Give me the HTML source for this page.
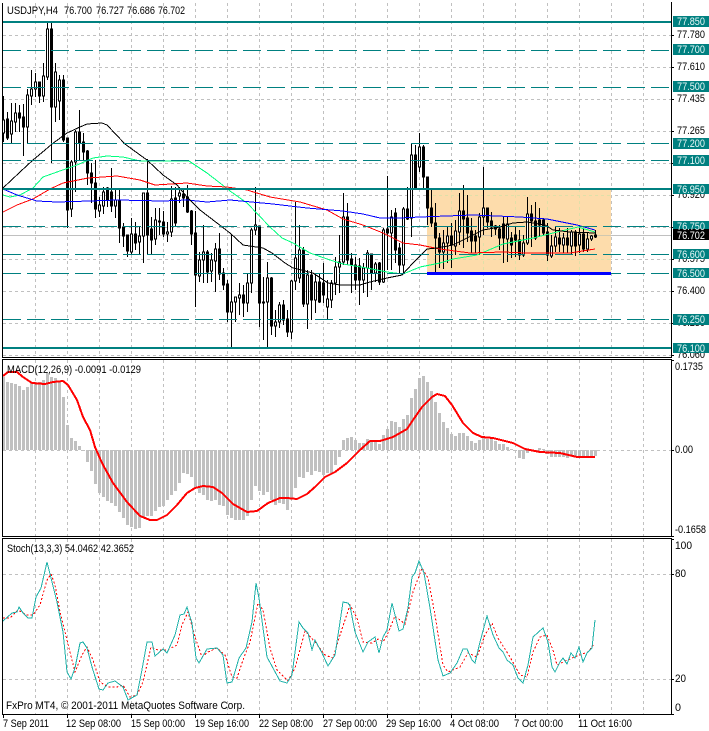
<!DOCTYPE html>
<html><head><meta charset="utf-8"><title>USDJPY,H4</title>
<style>
html,body{margin:0;padding:0;background:#fff;width:709px;height:731px;overflow:hidden}
svg{display:block;position:absolute;left:0;top:0}
text{font-family:"Liberation Sans",sans-serif;font-size:11px;fill:#000}
.l{fill:#e8f8f8}
path,polyline,rect,line{shape-rendering:crispEdges}
</style></head><body>
<svg width="709" height="731" viewBox="0 0 709 731" xmlns="http://www.w3.org/2000/svg">
<rect x="0" y="0" width="709" height="731" fill="#fff"/>
<!-- gray grid -->
<g stroke="#c0c0c0" stroke-width="1" stroke-dasharray="3 3" fill="none">
<path d="M3 35.5H671M3 67.5H671M3 99.5H671M3 131.5H671M3 163.5H671M3 195.5H671M3 227.5H671M3 259.5H671M3 291.5H671M3 323.5H671M3 355.5H671"/>
<path d="M35.5 3V357M67.5 3V357M99.5 3V357M131.5 3V357M163.5 3V357M195.5 3V357M227.5 3V357M259.5 3V357M291.5 3V357M323.5 3V357M355.5 3V357M387.5 3V357M419.5 3V357M451.5 3V357M483.5 3V357M515.5 3V357M547.5 3V357M579.5 3V357M611.5 3V357M643.5 3V357"/>
<path d="M3 450.5H671"/>
<path d="M35.5 360V536M67.5 360V536M99.5 360V536M131.5 360V536M163.5 360V536M195.5 360V536M227.5 360V536M259.5 360V536M291.5 360V536M323.5 360V536M355.5 360V536M387.5 360V536M419.5 360V536M451.5 360V536M483.5 360V536M515.5 360V536M547.5 360V536M579.5 360V536M611.5 360V536M643.5 360V536"/>
<path d="M3 574.5H671M3 679.5H671"/>
<path d="M35.5 539V714M67.5 539V714M99.5 539V714M131.5 539V714M163.5 539V714M195.5 539V714M227.5 539V714M259.5 539V714M291.5 539V714M323.5 539V714M355.5 539V714M387.5 539V714M419.5 539V714M451.5 539V714M483.5 539V714M515.5 539V714M547.5 539V714M579.5 539V714M611.5 539V714M643.5 539V714"/>
</g>
<!-- current price line -->
<path d="M3 235.5H671" stroke="#c0c0c0" fill="none"/>
<!-- rectangle -->
<rect x="427" y="189" width="184" height="84" fill="#fddcab"/>
<g stroke="#dfe0a8" stroke-width="1" stroke-dasharray="3 3" fill="none">
<path d="M451.5 189V273M483.5 189V273M515.5 189V273M547.5 189V273M579.5 189V273M427 195.5H611M427 259.5H611"/>
</g>
<path d="M427 235.5H611" stroke="#d0c8b0" fill="none"/>
<!-- wicks -->
<path stroke="#000" fill="none" d="M3.5 96V142M7.5 112V140M11.5 103V144M15.5 103V132M19.5 105V132M23.5 104V156M27.5 89V143M31.5 70V105M35.5 73V97M39.5 82V103M43.5 63V102M47.5 22V80M51.5 22V163M55.5 63V122M59.5 75V120M63.5 75V142M67.5 138V228M71.5 160V217M75.5 130V192M79.5 110V160M83.5 133V160M87.5 150V185M91.5 163V203M95.5 160V218M99.5 197V217M103.5 187V214M107.5 187V207M111.5 168V212M115.5 188V218M119.5 188V243M123.5 223V247M127.5 235V257M131.5 218V255M135.5 222V250M139.5 227V255M143.5 193V263M147.5 159V255M151.5 217V254M155.5 208V245M159.5 208V235M163.5 211V237M167.5 222V242M171.5 186V237M175.5 187V227M179.5 187V203M183.5 188V207M187.5 185V213M191.5 210V245M195.5 211V307M199.5 252V282M203.5 225V283M207.5 250V283M211.5 253V282M215.5 243V292M219.5 233V280M223.5 268V290M227.5 280V322M231.5 235V347M235.5 297V322M239.5 283V315M243.5 285V317M247.5 273V312M251.5 228V293M255.5 187V235M259.5 226V327M263.5 277V340M267.5 262V347M271.5 277V335M275.5 310V337M279.5 302V328M283.5 300V325M287.5 310V337M291.5 280V339M295.5 202V290M299.5 225V283M303.5 247V307M307.5 270V329M311.5 270V320M315.5 273V313M319.5 273V303M323.5 263V303M327.5 280V319M331.5 280V308M335.5 257V295M339.5 235V293M343.5 193V265M347.5 203V265M351.5 253V293M355.5 257V290M359.5 258V305M363.5 263V293M367.5 250V297M371.5 254V290M375.5 262V282M379.5 262V285M383.5 228V283M387.5 176V270M391.5 210V270M395.5 208V263M399.5 243V273M403.5 207V273M407.5 187V220M411.5 143V237M415.5 145V188M419.5 133V172M423.5 145V188M427.5 177V225M431.5 188V227M435.5 203V272M439.5 233V268M443.5 230V269M447.5 227V263M451.5 223V268M455.5 220V255M459.5 193V245M463.5 185V248M467.5 195V242M471.5 218V253M475.5 230V253M479.5 213V255M483.5 167V235M487.5 208V228M491.5 212V237M495.5 225V235M499.5 225V250M503.5 217V263M507.5 217V262M511.5 232V258M515.5 227V257M519.5 230V260M523.5 235V257M527.5 197V245M531.5 205V247M535.5 202V240M539.5 208V237M543.5 218V235M547.5 223V261M551.5 235V258M555.5 227V252M559.5 228V252M563.5 233V253M567.5 228V253M571.5 230V255M575.5 230V256M579.5 227V253M583.5 228V252M587.5 233V252M591.5 235V241M595.5 230V238"/>
<!-- white bodies -->
<path stroke="#000" fill="#fff" d="M2.5 120h2v13h-2zM10.5 121h2v13h-2zM14.5 113h2v9h-2zM26.5 95h2v32h-2zM30.5 89h2v7h-2zM34.5 82h2v7h-2zM42.5 76h2v20h-2zM46.5 29h2v48h-2zM54.5 72h2v35h-2zM58.5 80h2v21h-2zM70.5 162h2v47h-2zM74.5 132h2v30h-2zM98.5 205h2v6h-2zM102.5 192h2v14h-2zM114.5 200h2v6h-2zM130.5 234h2v18h-2zM138.5 236h2v6h-2zM142.5 193h2v43h-2zM154.5 220h2v19h-2zM158.5 221h2v1h-2zM166.5 232h2v2h-2zM170.5 199h2v33h-2zM178.5 193h2v3h-2zM198.5 260h2v16h-2zM202.5 252h2v8h-2zM210.5 260h2v11h-2zM214.5 249h2v12h-2zM230.5 302h2v10h-2zM234.5 297h2v5h-2zM238.5 295h2v3h-2zM246.5 283h2v20h-2zM250.5 230h2v53h-2zM254.5 225h2v5h-2zM266.5 278h2v24h-2zM274.5 322h2v4h-2zM278.5 305h2v17h-2zM290.5 281h2v51h-2zM294.5 258h2v23h-2zM298.5 250h2v28h-2zM306.5 275h2v29h-2zM314.5 282h2v18h-2zM326.5 299h2v8h-2zM330.5 283h2v17h-2zM334.5 267h2v16h-2zM338.5 262h2v5h-2zM342.5 217h2v45h-2zM362.5 268h2v12h-2zM366.5 253h2v15h-2zM374.5 264h2v9h-2zM382.5 230h2v52h-2zM390.5 217h2v16h-2zM402.5 209h2v56h-2zM410.5 155h2v63h-2zM418.5 147h2v20h-2zM442.5 243h2v9h-2zM446.5 236h2v7h-2zM454.5 231h2v15h-2zM458.5 211h2v21h-2zM478.5 217h2v20h-2zM482.5 208h2v9h-2zM506.5 224h2v15h-2zM522.5 243h2v12h-2zM526.5 214h2v29h-2zM550.5 246h2v10h-2zM554.5 237h2v9h-2zM562.5 238h2v7h-2zM570.5 232h2v14h-2zM578.5 234h2v11h-2zM586.5 239h2v10h-2zM590.5 236h2v3h-2z"/>
<!-- black bodies -->
<path stroke="#000" fill="#000" d="M6.5 119h2v19h-2zM18.5 113h2v5h-2zM22.5 117h2v10h-2zM38.5 82h2v14h-2zM50.5 29h2v78h-2zM62.5 80h2v60h-2zM66.5 138h2v72h-2zM78.5 132h2v11h-2zM82.5 142h2v10h-2zM86.5 151h2v22h-2zM90.5 173h2v10h-2zM94.5 183h2v26h-2zM106.5 188h2v12h-2zM110.5 192h2v14h-2zM118.5 200h2v28h-2zM122.5 227h2v9h-2zM126.5 235h2v16h-2zM134.5 234h2v9h-2zM146.5 193h2v42h-2zM150.5 229h2v11h-2zM162.5 222h2v12h-2zM174.5 198h2v25h-2zM182.5 194h2v4h-2zM186.5 197h2v15h-2zM190.5 211h2v23h-2zM194.5 233h2v42h-2zM206.5 252h2v20h-2zM218.5 249h2v25h-2zM222.5 273h2v12h-2zM226.5 284h2v28h-2zM242.5 295h2v8h-2zM258.5 226h2v77h-2zM262.5 302h2v1h-2zM270.5 278h2v48h-2zM282.5 305h2v15h-2zM286.5 319h2v13h-2zM302.5 250h2v54h-2zM310.5 275h2v25h-2zM318.5 282h2v20h-2zM322.5 283h2v12h-2zM346.5 217h2v43h-2zM350.5 259h2v6h-2zM354.5 265h2v15h-2zM358.5 266h2v14h-2zM370.5 254h2v19h-2zM378.5 263h2v19h-2zM386.5 229h2v4h-2zM394.5 213h2v37h-2zM398.5 248h2v17h-2zM406.5 209h2v10h-2zM414.5 155h2v33h-2zM422.5 147h2v30h-2zM426.5 177h2v31h-2zM430.5 208h2v15h-2zM434.5 223h2v15h-2zM438.5 238h2v14h-2zM450.5 236h2v9h-2zM462.5 211h2v8h-2zM466.5 218h2v15h-2zM470.5 231h2v10h-2zM474.5 236h2v5h-2zM486.5 208h2v14h-2zM490.5 221h2v6h-2zM494.5 226h2v3h-2zM498.5 229h2v9h-2zM502.5 224h2v14h-2zM510.5 238h2v7h-2zM514.5 235h2v5h-2zM518.5 240h2v15h-2zM530.5 214h2v7h-2zM534.5 221h2v17h-2zM538.5 220h2v5h-2zM542.5 220h2v13h-2zM546.5 232h2v23h-2zM558.5 238h2v6h-2zM566.5 238h2v7h-2zM574.5 232h2v14h-2zM582.5 234h2v15h-2zM594.5 235h2v2h-2z"/>
<!-- moving averages -->
<g fill="none" stroke-width="1">
<polyline stroke="#00ff7f" points="3,195 10,197 20,195 33,188 43,177 57,172 77,165 93,158 107,156 123,157 140,161 189,161 207,173 220,183 230,191 247,203 270,227 282,238 293,243 310,253 330,260 343,264 367,268 387,272 403,274 420,267 440,263 453,259 477,255 503,244 533,238 557,232 578,227 595,232"/>
<polyline stroke="#ff0000" points="3,212 17,205 33,199 50,189 63,183 88,178 117,176 140,180 155,185 187,183 207,186 227,187 247,190 270,197 300,202 327,210 343,219 363,225 383,233 403,243 420,245 440,249 470,253 503,252 527,253 570,253 595,249"/>
<polyline stroke="#0000ff" points="3,189 17,195 37,201 57,202 90,201 117,200 163,201 187,200 207,202 230,200 273,204 307,208 343,211 363,214 380,218 400,218 420,217 473,215 520,217 547,219 577,225 595,230"/>
<polyline stroke="#000" points="3,188 20,172 33,160 45,150 52,144 67,133 80,127 87,124 102,123 107,125 125,144 140,155 147,160 163,175 177,185 187,197 200,210 217,223 230,233 243,245 263,248 272,253 285,263 293,268 313,273 328,283 340,285 360,285 370,282 387,278 402,275 413,263 420,256 427,249 437,248 453,245 463,240 483,230 500,227 513,223 527,222 545,225 553,230 570,232 595,233"/>
</g>
<!-- teal lines -->
<g fill="none" stroke="#008080">
<path stroke-width="2" d="M3 22H671M3 189H671M3 348H671"/>
<path stroke-width="1" stroke-dasharray="18 6" d="M3 50.5H669M3 87.5H669M3 143.5H669M3 160.5H669M3 226.5H669M3 254.5H669M3 273.5H669M3 319.5H669"/>
</g>
<rect x="427" y="272" width="184" height="3" fill="#0000ff"/>
<!-- MACD histogram -->
<path stroke="#c0c0c0" stroke-width="3" fill="none" d="M3.5 450V377M7.5 450V382M11.5 450V383M15.5 450V384M19.5 450V386M23.5 450V390M27.5 450V387M31.5 450V383M35.5 450V382M39.5 450V382M43.5 450V380M47.5 450V373M51.5 450V377M55.5 450V378M59.5 450V382M63.5 450V397M67.5 450V425M71.5 450V438M75.5 450V441M79.5 450V446M83.5 450V451M87.5 450V462M91.5 450V471M95.5 450V484M99.5 450V493M103.5 450V497M107.5 450V501M111.5 450V503M115.5 450V506M119.5 450V512M123.5 450V518M127.5 450V525M131.5 450V527M135.5 450V529M139.5 450V528M143.5 450V517M147.5 450V516M151.5 450V516M155.5 450V511M159.5 450V507M163.5 450V506M167.5 450V500M171.5 450V495M175.5 450V491M179.5 450V483M183.5 450V473M187.5 450V474M191.5 450V477M195.5 450V488M199.5 450V493M203.5 450V495M207.5 450V500M211.5 450V501M215.5 450V500M219.5 450V505M223.5 450V506M227.5 450V515M231.5 450V518M235.5 450V520M239.5 450V520M243.5 450V520M247.5 450V516M251.5 450V500M255.5 450V486M259.5 450V491M263.5 450V495M267.5 450V492M271.5 450V500M275.5 450V505M279.5 450V503M283.5 450V504M287.5 450V510M291.5 450V498M295.5 450V488M299.5 450V477M303.5 450V478M307.5 450V472M311.5 450V475M315.5 450V471M319.5 450V472M323.5 450V475M327.5 450V473M331.5 450V473M335.5 450V465M339.5 450V457M343.5 450V440M347.5 450V438M351.5 450V437M355.5 450V440M359.5 450V443M363.5 450V443M367.5 450V439M371.5 450V440M375.5 450V442M379.5 450V444M383.5 450V435M387.5 450V429M391.5 450V421M395.5 450V422M399.5 450V427M403.5 450V419M407.5 450V415M411.5 450V398M415.5 450V389M419.5 450V378M423.5 450V376M427.5 450V382M431.5 450V391M435.5 450V402M439.5 450V413M443.5 450V422M447.5 450V428M451.5 450V434M455.5 450V436M459.5 450V433M463.5 450V433M467.5 450V436M471.5 450V441M475.5 450V443M479.5 450V440M483.5 450V438M487.5 450V439M491.5 450V438M495.5 450V441M499.5 450V444M503.5 450V444M507.5 450V447M511.5 450V449M515.5 450V451M519.5 450V458M523.5 450V459M527.5 450V453M531.5 450V451M535.5 450V451M539.5 450V448M543.5 450V449M547.5 450V454M551.5 450V457M555.5 450V457M559.5 450V457M563.5 450V457M567.5 450V458M571.5 450V456M575.5 450V456M579.5 450V457M583.5 450V458M587.5 450V456M591.5 450V457M595.5 450V456"/>
<!-- MACD signal -->
<polyline fill="none" stroke="#ff0000" stroke-width="2" points="3,376 8,372 17,372 23,377 32,383 45,384 53,382 63,381 68,385 77,400 83,417 90,430 95,447 102,463 113,483 127,502 140,516 150,520 157,520 167,515 177,505 187,493 195,488 203,486 213,487 222,493 233,504 247,512 257,511 268,503 280,498 287,498 297,499 307,494 315,487 325,477 335,472 347,463 360,450 370,441 380,441 393,437 407,429 413,420 422,407 432,397 437,394 445,396 452,405 463,423 473,433 482,437 493,438 513,443 525,449 540,452 560,453 577,457 595,457"/>
<!-- Stochastic -->
<polyline fill="none" stroke="#ff0000" stroke-dasharray="2 2" points="3,618 10,618 18,610 27,615 33,615 40,605 47,580 51,574 55,585 60,612 65,632 70,652 75,672 82,655 87,647 93,660 100,682 108,687 117,687 123,685 130,697 137,695 143,682 151,647 158,650 167,650 177,645 182,625 188,612 195,637 202,657 208,652 217,648 225,655 232,677 237,678 243,660 250,642 258,603 263,610 270,648 277,670 288,681 295,668 305,631 315,642 325,655 333,658 340,635 350,605 357,618 363,642 372,643 378,639 383,642 388,633 395,616 405,624 413,592 422,568 428,578 435,615 443,665 448,672 460,667 468,653 477,657 485,635 492,623 498,638 510,657 520,675 527,677 533,652 540,637 547,635 553,650 557,665 563,662 572,658 580,655 588,652 594,644"/>
<polyline fill="none" stroke="#20b2aa" points="3,621 12,613 17,612 19,607 23,613 28,618 32,618 36,597 41,588 47,562 52,582 57,602 63,632 67,672 71,679 75,668 80,643 83,642 87,648 92,667 99,689 103,690 108,683 115,681 123,687 128,700 137,695 141,675 147,642 152,642 155,656 163,649 167,653 175,635 180,615 184,614 187,607 192,623 196,658 199,663 207,649 217,648 223,655 227,683 232,682 239,658 246,648 252,622 256,583 259,598 263,628 267,657 280,681 287,683 292,675 299,622 303,628 308,633 312,650 315,640 322,653 328,666 335,655 343,602 348,603 350,606 355,632 363,652 368,642 375,637 379,653 383,637 387,630 392,603 395,615 399,631 403,629 408,608 412,577 415,573 419,561 424,573 430,608 438,660 443,676 450,673 457,663 463,649 467,649 472,660 475,663 480,642 487,616 493,635 499,648 503,652 507,660 513,665 518,678 523,683 528,665 533,637 543,628 548,642 552,667 555,672 560,662 563,658 567,664 571,653 575,658 579,647 583,662 587,653 592,648 595,620"/>
<!-- frames -->
<g stroke="#000" fill="none">
<path d="M2.5 3V357.5H671.5V2"/>
<path d="M2.5 359.5H671.5V536.5H2.5Z"/>
<path d="M2.5 538.5H671.5V714.5H2.5Z"/>
<path d="M672 35.5h2M672 67.5h2M672 99.5h2M672 131.5h2M672 163.5h2M672 195.5h2M672 227.5h2M672 259.5h2M672 291.5h2M672 323.5h2M672 355.5h2M672 360.5h2M672 450.5h2M672 536.5h2M672 539.5h2M672 574.5h2M672 679.5h2M672 714.5h2"/>
<path d="M3.5 715v3M67.5 715v3M131.5 715v3M195.5 715v3M259.5 715v3M323.5 715v3M387.5 715v3M451.5 715v3M515.5 715v3M579.5 715v3"/>
</g>
<!-- header text -->
<text lengthAdjust="spacingAndGlyphs" x="7" y="14" textLength="51">USDJPY,H4</text>
<text lengthAdjust="spacingAndGlyphs" x="64" y="14" textLength="28">76.700</text>
<text lengthAdjust="spacingAndGlyphs" x="96" y="14" textLength="28">76.727</text>
<text lengthAdjust="spacingAndGlyphs" x="127" y="14" textLength="28">76.686</text>
<text lengthAdjust="spacingAndGlyphs" x="158" y="14" textLength="27">76.702</text>
<text lengthAdjust="spacingAndGlyphs" x="7" y="373" textLength="134">MACD(12,26,9) -0.0091 -0.0129</text>
<text lengthAdjust="spacingAndGlyphs" x="7" y="552" textLength="127">Stoch(13,3,3) 54.0462 42.3652</text>
<text lengthAdjust="spacingAndGlyphs" x="6" y="709" textLength="239">FxPro MT4, © 2001-2011 MetaQuotes Software Corp.</text>
<!-- price axis -->
<text lengthAdjust="spacingAndGlyphs" x="677" y="38" textLength="28">77.780</text>
<text lengthAdjust="spacingAndGlyphs" x="677" y="70" textLength="28">77.610</text>
<text lengthAdjust="spacingAndGlyphs" x="677" y="102" textLength="28">77.435</text>
<text lengthAdjust="spacingAndGlyphs" x="677" y="134" textLength="28">77.265</text>
<text lengthAdjust="spacingAndGlyphs" x="677" y="166" textLength="28">77.095</text>
<text lengthAdjust="spacingAndGlyphs" x="677" y="198" textLength="28">76.920</text>
<text lengthAdjust="spacingAndGlyphs" x="677" y="262" textLength="28">76.575</text>
<text lengthAdjust="spacingAndGlyphs" x="677" y="294" textLength="28">76.400</text>
<text lengthAdjust="spacingAndGlyphs" x="677" y="326" textLength="28">76.230</text>
<text lengthAdjust="spacingAndGlyphs" x="677" y="358" textLength="28">76.060</text>
<g fill="#008080">
<rect x="673" y="16" width="36" height="11"/>
<rect x="673" y="44" width="36" height="11"/>
<rect x="673" y="81" width="36" height="11"/>
<rect x="673" y="138" width="36" height="11"/>
<rect x="673" y="155" width="36" height="11"/>
<rect x="673" y="184" width="36" height="10"/>
<rect x="673" y="221" width="36" height="11"/>
<rect x="673" y="249" width="36" height="10"/>
<rect x="673" y="268" width="36" height="10"/>
<rect x="673" y="314" width="36" height="11"/>
<rect x="673" y="343" width="36" height="10"/>
</g>
<rect x="673" y="229" width="36" height="11" fill="#000"/>
<text lengthAdjust="spacingAndGlyphs" class="l" x="677" y="25" textLength="28">77.850</text>
<text lengthAdjust="spacingAndGlyphs" class="l" x="677" y="53" textLength="28">77.700</text>
<text lengthAdjust="spacingAndGlyphs" class="l" x="677" y="90" textLength="28">77.500</text>
<text lengthAdjust="spacingAndGlyphs" class="l" x="677" y="147" textLength="28">77.200</text>
<text lengthAdjust="spacingAndGlyphs" class="l" x="677" y="164" textLength="28">77.100</text>
<text lengthAdjust="spacingAndGlyphs" class="l" x="677" y="193" textLength="28">76.950</text>
<text lengthAdjust="spacingAndGlyphs" class="l" x="677" y="230" textLength="28">76.750</text>
<text lengthAdjust="spacingAndGlyphs" style="fill:#fff" x="677" y="239" textLength="28">76.702</text>
<text lengthAdjust="spacingAndGlyphs" class="l" x="677" y="258" textLength="28">76.600</text>
<text lengthAdjust="spacingAndGlyphs" class="l" x="677" y="277" textLength="28">76.500</text>
<text lengthAdjust="spacingAndGlyphs" class="l" x="677" y="323" textLength="28">76.250</text>
<text lengthAdjust="spacingAndGlyphs" class="l" x="677" y="352" textLength="28">76.100</text>
<!-- indicator axes -->
<text lengthAdjust="spacingAndGlyphs" x="675" y="370" textLength="28">0.1735</text>
<text lengthAdjust="spacingAndGlyphs" x="675" y="453" textLength="18">0.00</text>
<text lengthAdjust="spacingAndGlyphs" x="675" y="533" textLength="31">-0.1658</text>
<text lengthAdjust="spacingAndGlyphs" x="675" y="549" textLength="17">100</text>
<text lengthAdjust="spacingAndGlyphs" x="675" y="577" textLength="11">80</text>
<text lengthAdjust="spacingAndGlyphs" x="675" y="682" textLength="11">20</text>
<text lengthAdjust="spacingAndGlyphs" x="675" y="711" textLength="6">0</text>
<!-- date axis -->
<text lengthAdjust="spacingAndGlyphs" x="3" y="727" textLength="46">7 Sep 2011</text>
<text lengthAdjust="spacingAndGlyphs" x="66" y="727" textLength="55">12 Sep 08:00</text>
<text lengthAdjust="spacingAndGlyphs" x="131" y="727" textLength="54">15 Sep 00:00</text>
<text lengthAdjust="spacingAndGlyphs" x="195" y="727" textLength="54">19 Sep 16:00</text>
<text lengthAdjust="spacingAndGlyphs" x="259" y="727" textLength="54">22 Sep 08:00</text>
<text lengthAdjust="spacingAndGlyphs" x="323" y="727" textLength="54">27 Sep 00:00</text>
<text lengthAdjust="spacingAndGlyphs" x="386" y="727" textLength="55">29 Sep 16:00</text>
<text lengthAdjust="spacingAndGlyphs" x="450" y="727" textLength="49">4 Oct 08:00</text>
<text lengthAdjust="spacingAndGlyphs" x="514" y="727" textLength="49">7 Oct 00:00</text>
<text lengthAdjust="spacingAndGlyphs" x="578" y="727" textLength="54">11 Oct 16:00</text>
</svg>
</body></html>
